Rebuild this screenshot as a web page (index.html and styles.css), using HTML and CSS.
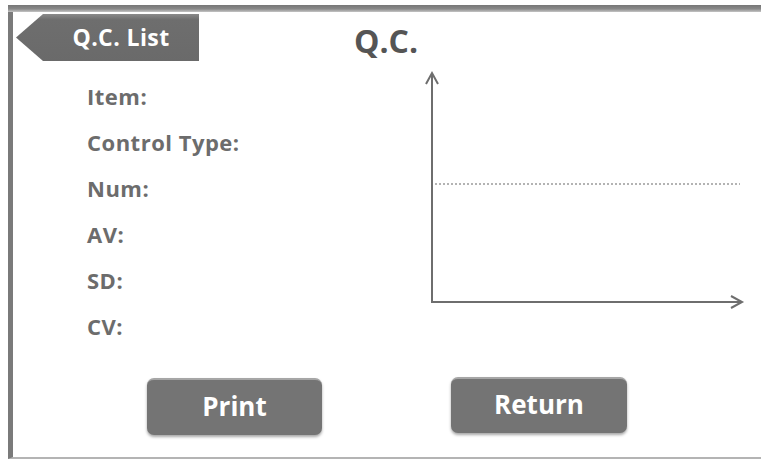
FILE: index.html
```html
<!DOCTYPE html>
<html lang="en">
<head>
  <meta charset="UTF-8">
  <title>Q.C.</title>
  <link rel="stylesheet" href="styles.css">
</head>
<body>
  <div class="screen">
    <div class="topbar"></div>
    <div class="frame">
      <div class="head">
        <button class="back-tab">Q.C. List</button>
        <h1 class="title">Q.C.</h1>
      </div>

      <div class="main">
        <ul class="fields">
          <li>Item:</li>
          <li>Control Type:</li>
          <li>Num:</li>
          <li>AV:</li>
          <li>SD:</li>
          <li>CV:</li>
        </ul>
        <svg class="chart" width="340" height="250" viewBox="0 0 340 250">
          <line x1="23" y1="122" x2="328" y2="122" stroke="#9a9a9a" stroke-width="1.5" stroke-dasharray="2 2"/>
          <line x1="20" y1="13" x2="20" y2="240" stroke="#6e6e6e" stroke-width="2"/>
          <line x1="19" y1="240" x2="328" y2="240" stroke="#6e6e6e" stroke-width="2"/>
          <polyline points="14,22 20,11 26,22" fill="none" stroke="#6e6e6e" stroke-width="2"/>
          <polyline points="319,234 330,240 319,246" fill="none" stroke="#6e6e6e" stroke-width="2"/>
        </svg>
      </div>

      <div class="actions">
        <button class="btn">Print</button>
        <button class="btn btn-return">Return</button>
      </div>
    </div>
  </div>
</body>
</html>
```

FILE: styles.css
```css
body {
  margin: 0;
  background: #fff;
  font-family: "Open Sans", "DejaVu Sans", sans-serif;
}
.screen {
  margin: 5px 0 0 8px;
  height: 454px;
  display: flex;
  flex-direction: column;
}
.topbar {
  height: 7px;
  background: linear-gradient(#767676, #888 55%, #c4c4c4);
}
.frame {
  flex: 1;
  display: flex;
  flex-direction: column;
  border-left: 5px solid #7a7a7a;
  border-bottom: 2px solid #b4b4b4;
}
.head {
  display: flex;
  align-items: flex-start;
  height: 50px;
}
.back-tab {
  margin: 2px 0 0 3px;
  width: 183px;
  height: 47px;
  padding: 0 0 2px 27px;
  border: none;
  background: linear-gradient(#8a8a8a, #6e6e6e 12%, #6a6a6a);
  clip-path: polygon(0 50%, 27px 0, 100% 0, 100% 100%, 27px 100%);
  color: #fff;
  font-family: inherit;
  font-size: 23px;
  font-weight: 700;
  letter-spacing: 0.4px;
}
.title {
  margin: 9px 0 0 155px;
  font-size: 32px;
  font-weight: 700;
  line-height: 40px;
  color: #555;
}
.main {
  display: flex;
  align-items: flex-start;
}
.fields {
  list-style: none;
  margin: 0;
  padding: 11px 0 0 74px;
  width: 325px;
}
.fields li {
  height: 46px;
  line-height: 46px;
  font-size: 22px;
  font-weight: 700;
  letter-spacing: 0.5px;
  color: #6c6c6c;
}
.chart {
  display: block;
}
.actions {
  display: flex;
  gap: 129px;
  padding: 29px 0 0 134px;
}
.btn {
  width: 175px;
  height: 57px;
  border: none;
  border-top: 2px solid #a6a6a6;
  border-radius: 7px;
  background: #747474;
  box-shadow: 0 2px 3px rgba(0, 0, 0, 0.35);
  color: #fff;
  font-family: inherit;
  font-size: 26px;
  font-weight: 700;
  padding: 0 0 4px;
}
.btn-return {
  width: 176px;
  height: 56px;
  margin-top: -1px;
}
```
